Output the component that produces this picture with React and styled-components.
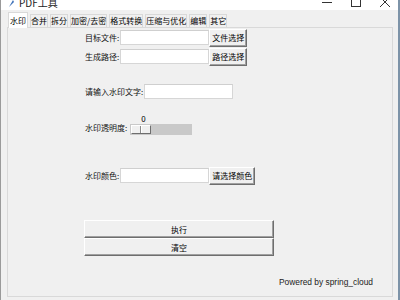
import React from 'react';
import styled, { createGlobalStyle } from 'styled-components';

const Global = createGlobalStyle`
  html, body { margin: 0; padding: 0; background: #f0f0f0; }
  * { box-sizing: border-box; }
`;

const Window = styled.div`
  width: 400px;
  height: 300px;
  display: flex;
  flex-direction: column;
  background: #f0f0f0;
  border-left: 1px solid #9a9a9a;
  border-right: 2px solid #7d93a8;
  font-family: "Noto Sans CJK SC", "Liberation Sans", sans-serif;
  font-size: 8px;
  color: #000;
  overflow: hidden;
`;

const TitleBar = styled.div`
  height: 10px;
  flex: none;
  background: #fff;
  display: flex;
  align-items: flex-end;
  overflow: hidden;
`;

const TitleText = styled.div`
  display: flex;
  align-items: center;
  gap: 4px;
  margin-left: 7px;
  margin-bottom: 2px;
  font-size: 10px;
  line-height: 10px;
  color: #222;
`;

const Controls = styled.div`
  margin-left: auto;
  display: flex;
  align-items: flex-end;
  gap: 19px;
  margin-right: 8px;
  margin-bottom: 3px;
`;

const Body = styled.div`
  flex: 1;
  display: flex;
  flex-direction: column;
  padding: 2px 5px 3px 6px;
`;

const TabRow = styled.div`
  display: flex;
  align-items: flex-end;
  height: 15px;
  padding-left: 1px;
`;

const Tab = styled.div`
  height: ${p => (p.$active ? '16px' : '14px')};
  padding: 0 ${p => (p.$active ? '1px' : '0')};
  margin-bottom: -1px;
  background: ${p => (p.$active ? '#fff' : '#f0f0f0')};
  border: 1px solid #d9d9d9;
  border-bottom: ${p => (p.$active ? 'none' : '1px solid #d9d9d9')};
  display: flex;
  align-items: center;
  line-height: 12px;
  position: relative;
  z-index: ${p => (p.$active ? 2 : 1)};
  & + & { margin-left: 2px; }
`;

const Panel = styled.div`
  flex: 1;
  border: 1px solid #d9d9d9;
  display: flex;
  flex-direction: column;
  padding-left: 77px;
`;

const Row = styled.div`
  display: flex;
  align-items: center;
  margin-top: ${p => p.$mt}px;
  height: ${p => p.$h || 17}px;
`;

const Label = styled.span`
  white-space: nowrap;
  color: #111;
`;

const Entry = styled.div`
  width: 89px;
  height: 15px;
  background: #fff;
  border: 1px solid #d6d6d6;
  border-top-color: #cfcfcf;
  margin-left: 1px;
`;

const Button = styled.div`
  height: 18px;
  padding: 0 2px;
  display: flex;
  align-items: center;
  justify-content: center;
  background: #f0f0f0;
  border-top: 1px solid #fff;
  border-left: 1px solid #fff;
  border-right: 1px solid #6e6e6e;
  border-bottom: 1px solid #6e6e6e;
  box-shadow: inset -1px -1px 0 #a0a0a0;
  white-space: nowrap;
`;

const WideButton = styled(Button)`
  width: 190px;
  margin-left: -1px;
`;

const ScaleBox = styled.div`
  display: flex;
  flex-direction: column;
  margin-left: 3px;
  margin-top: -5px;
`;

const ScaleValue = styled.div`
  padding-left: 11px;
  height: 8px;
  line-height: 8px;
`;

const Trough = styled.div`
  width: 62px;
  height: 11px;
  margin-top: 1px;
  background: #c9c9c9;
  padding: 1px;
  display: flex;
`;

const Slider = styled.div`
  width: 20px;
  height: 9px;
  background: #f0f0f0;
  border-top: 1px solid #fff;
  border-left: 1px solid #fff;
  border-right: 1px solid #6e6e6e;
  border-bottom: 1px solid #6e6e6e;
  display: flex;
  justify-content: center;
  &::after {
    content: '';
    width: 1px;
    background: #8a8a8a;
    border-right: 1px solid #fff;
  }
`;

const Footer = styled.div`
  margin-top: auto;
  margin-bottom: 9px;
  align-self: flex-end;
  margin-right: 19px;
  font-family: "Liberation Sans", Arial, sans-serif;
  font-size: 8.4px;
  line-height: 10px;
  color: #222;
`;

const tabs = ['水印', '合并', '拆分', '加密/去密', '格式转换', '压缩与优化', '编辑', '其它'];

export default function App() {
  return (
    <>
      <Global />
      <Window>
        <TitleBar>
          <TitleText>
            <svg width="7" height="9" viewBox="0 0 7 9">
              <path d="M1 8 L5 1 L6 3 Z" fill="#3b6fb6" />
            </svg>
            <span>PDF工具</span>
          </TitleText>
          <Controls>
            <svg width="10" height="10" viewBox="0 0 10 10"><path d="M0 5.5h10" stroke="#333" /></svg>
            <svg width="10" height="10" viewBox="0 0 10 10"><rect x="0.5" y="0.5" width="9" height="9" fill="none" stroke="#333" /></svg>
            <svg width="10" height="10" viewBox="0 0 10 10"><path d="M0 0L10 10M10 0L0 10" stroke="#333" /></svg>
          </Controls>
        </TitleBar>
        <Body>
          <TabRow>
            {tabs.map((t, i) => (
              <Tab key={t} $active={i === 0}>{t}</Tab>
            ))}
          </TabRow>
          <Panel>
            <Row $mt={1}>
              <Label>目标文件:</Label>
              <Entry />
              <Button>文件选择</Button>
            </Row>
            <Row $mt={2}>
              <Label>生成路径:</Label>
              <Entry />
              <Button>路径选择</Button>
            </Row>
            <Row $mt={19} $h={15}>
              <Label>请输入水印文字:</Label>
              <Entry />
            </Row>
            <Row $mt={21} $h={15}>
              <Label>水印透明度:</Label>
              <ScaleBox>
                <ScaleValue>0</ScaleValue>
                <Trough><Slider /></Trough>
              </ScaleBox>
            </Row>
            <Row $mt={32}>
              <Label>水印颜色:</Label>
              <Entry />
              <Button>请选择颜色</Button>
            </Row>
            <Row $mt={36} $h={18}>
              <WideButton>执行</WideButton>
            </Row>
            <Row $mt={0} $h={18}>
              <WideButton>清空</WideButton>
            </Row>
            <Footer>Powered by spring_cloud</Footer>
          </Panel>
        </Body>
      </Window>
    </>
  );
}
